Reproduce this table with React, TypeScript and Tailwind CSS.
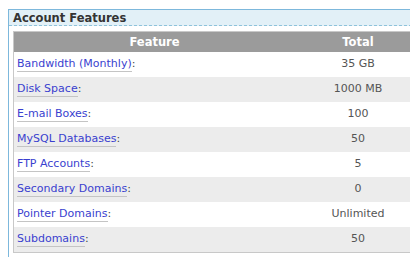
const ROWS = [
  { label: 'Bandwidth (Monthly)', value: '35 GB' },
  { label: 'Disk Space', value: '1000 MB' },
  { label: 'E-mail Boxes', value: '100' },
  { label: 'MySQL Databases', value: '50' },
  { label: 'FTP Accounts', value: '5' },
  { label: 'Secondary Domains', value: '0' },
  { label: 'Pointer Domains', value: 'Unlimited' },
  { label: 'Subdomains', value: '50' },
]

export default function App() {
  return (
    <div className="w-[410px] h-[257px] overflow-hidden bg-white pt-[9px] pl-[8px] font-['DejaVu_Sans',Verdana,sans-serif]">
      <div className="w-[430px] border border-[#7db8dc] bg-white pb-8">
        {/* Title */}
        <div className="h-[16px] bg-[#e2f0f7] border-b border-dashed border-[#8fc3db] pl-[4px] text-[11.5px] leading-[17px] font-bold text-[#333]">
          Account Features
        </div>

        {/* Table */}
        <div className="mt-[5px] ml-[4px] w-[409px] border border-[#c8c8c8]">
          <div className="flex h-[20px] bg-[#9b9b9b] text-white text-[11.5px] font-bold leading-[20px]">
            <div className="w-[281px] text-center">Feature</div>
            <div className="flex-1 text-center">Total</div>
          </div>
          {ROWS.map((row, i) => (
            <div
              key={row.label}
              className={`flex h-[25px] items-center text-[11px] leading-[14px] pb-[2px] ${i % 2 ? 'bg-[#ececec]' : 'bg-white'}`}
            >
              <div className="w-[281px] pl-[3px] text-[#444]">
                <a className="text-[#3a3fcf] border-b border-[#c4c4c4] pb-[1px]">{row.label}</a>:
              </div>
              <div className="flex-1 text-center text-[#555]">{row.value}</div>
            </div>
          ))}
        </div>
      </div>
    </div>
  )
}
